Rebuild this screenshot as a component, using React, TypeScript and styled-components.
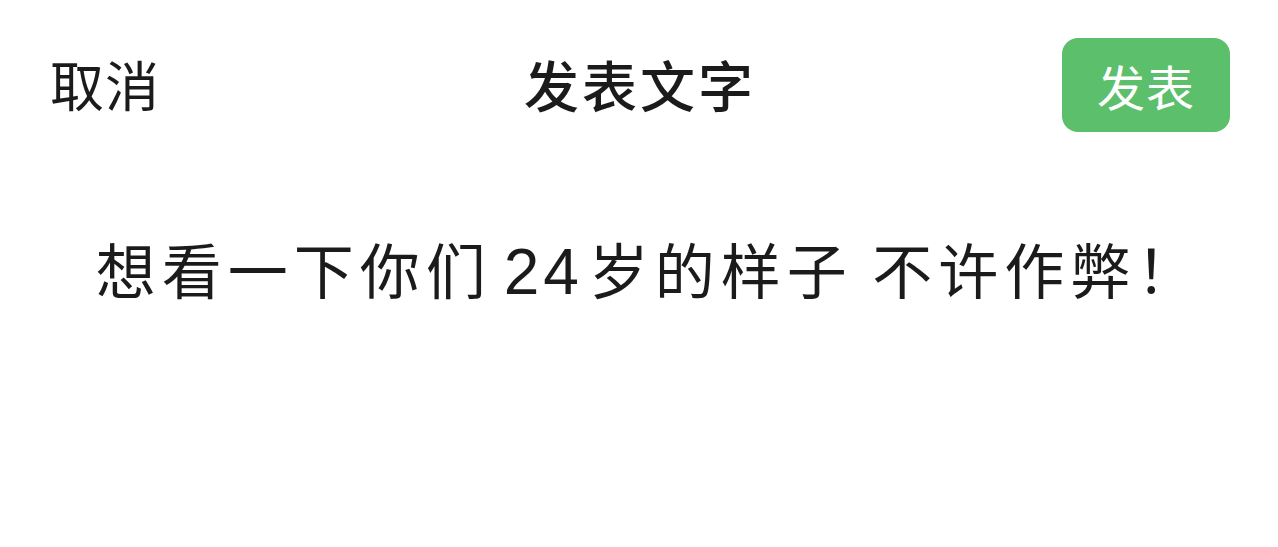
import React from 'react';
import styled, { createGlobalStyle } from 'styled-components';

const GlobalStyle = createGlobalStyle`
  html, body {
    margin: 0;
    padding: 0;
    background: #ffffff;
  }
  body {
    font-family: "Noto Sans CJK SC", "Noto Sans", sans-serif;
    color: #1b1b1b;
  }
`;

const Page = styled.div`
  width: 1278px;
  height: 547px;
  background: #ffffff;
  display: flex;
  flex-direction: column;
  overflow: hidden;
`;

const Header = styled.header`
  display: grid;
  grid-template-columns: 1fr auto 1fr;
  align-items: center;
  padding: 38px 48px 0 50px;
  height: 94px;
`;

const Cancel = styled.button`
  justify-self: start;
  border: none;
  background: none;
  padding: 0;
  font-family: inherit;
  font-size: 54px;
  line-height: 1;
  letter-spacing: 1px;
  color: #1b1b1b;
  cursor: pointer;
  transform: translateY(-1px);
`;

const Title = styled.h1`
  margin: 0;
  font-size: 55px;
  font-weight: 500;
  line-height: 1;
  letter-spacing: 3px;
  color: #1b1b1b;
  transform: translate(0, -2px);
`;

const Publish = styled.button`
  justify-self: end;
  width: 168px;
  height: 94px;
  border: none;
  border-radius: 16px;
  background: #5cbf6b;
  color: #ffffff;
  font-family: inherit;
  font-size: 48px;
  line-height: 1;
  letter-spacing: 1px;
  cursor: pointer;
`;

const Body = styled.main`
  flex: 1;
  display: flex;
  justify-content: center;
  padding: 100px 0 0 20px;
`;

const Post = styled.p`
  margin: 0;
  font-size: 60px;
  line-height: 1.2;
  letter-spacing: 6px;
  color: #1b1b1b;
  white-space: nowrap;
`;

const Num = styled.span`
  font-family: "Liberation Sans", "Noto Sans", sans-serif;
  font-size: 64px;
  letter-spacing: 4px;
  margin: 0 6px 0 12px;
`;

export default function App() {
  return (
    <Page>
      <GlobalStyle />
      <Header>
        <Cancel>取消</Cancel>
        <Title>发表文字</Title>
        <Publish>发表</Publish>
      </Header>
      <Body>
        <Post>
          想看一下你们<Num>24</Num>岁的样子 不许作弊！
        </Post>
      </Body>
    </Page>
  );
}
